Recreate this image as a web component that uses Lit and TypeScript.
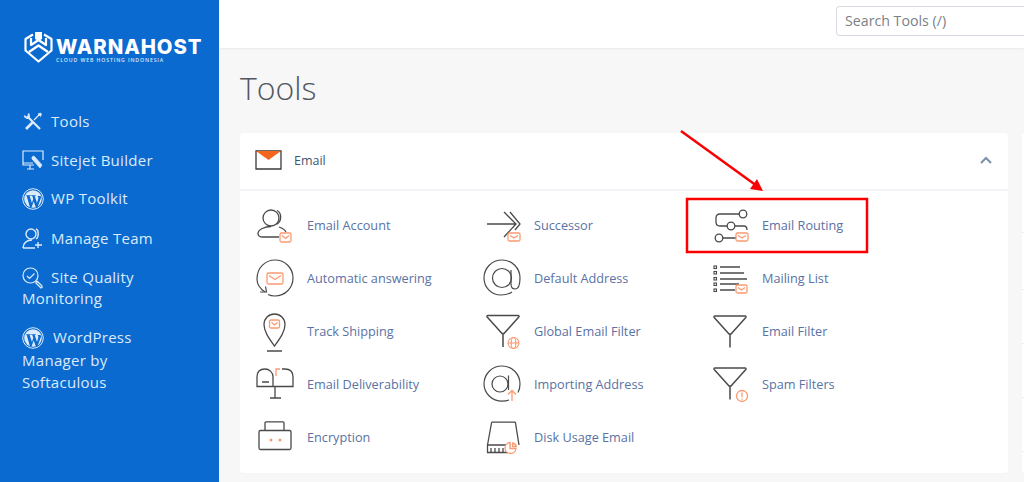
import { LitElement, html, css, svg } from "lit";
import { customElement } from "lit/decorators.js";

const O = "#fb9a70";
const D = "#4a4a4a";
const env = (x: number, y: number, w = 12, h = 10) => svg`<g fill="#fff" stroke="${O}" stroke-width="1.3"><rect x="${x}" y="${y}" width="${w}" height="${h}" rx="1.5"/><path fill="none" d="M${x + 2} ${y + 2.5}l${w / 2 - 2} ${h / 2 - 1.5}l${w / 2 - 2} ${-(h / 2 - 1.5)}"/></g>`;
const funnel = svg`<path d="M2.5 3.5h30c1 0 1.300 1 .8 1.600L18.500 21.500H16.500L1.700 5.100C1.200 4.500 1.500 3.500 2.500 3.500zM17.500 21.500V35" fill="none" stroke="${D}" stroke-width="1.500"/>`;

const ICONS: Record<string, unknown> = {
  account: svg`<g fill="none" stroke="${D}" stroke-width="1.300"><circle cx="16" cy="10" r="8"/><path d="M22 2.500c5 2.500 5 11-.5 14M24 19c3 1 6 3 7 5M24 29H8c-3 0-5-1-5-3.500 0-4 7-7 13-7"/></g>${env(25, 25, 11, 9)}`,
  auto: svg`<g fill="none" stroke="${D}" stroke-width="1.200"><path d="M9 33C3 29 1 24 1 20 1 9 9 1 19 1s18 8 18 18-8 18-18 18c-3 0-5-.5-7-1.500"/><path d="M4 33h6.500l-1-5.500" /></g>${env(11, 14, 16, 11)}`,
  track: svg`<g fill="none" stroke="${D}" stroke-width="1.300"><path d="M13 34C8 27 2.500 20 2.500 12.500a10.500 10.500 0 0 1 21 0C23.500 20 18 27 13 34z"/><path d="M5.500 39h15" stroke-width="1.500"/></g>${env(8, 8, 10, 8)}`,
  deliver: svg`<g fill="none" stroke="${D}" stroke-width="1.300"><path d="M9 2h0c-5 0-8 3-8 8v9.500h36V10c0-5-3-8-8-8h-3M9 2c4 0 8 3 8 8v9.500M19 19.500V31M14 31h11M6 15h7" /></g><path d="M20 9V2h4" fill="none" stroke="${O}" stroke-width="1.300"/>`,
  encrypt: svg`<g fill="none" stroke="${D}" stroke-width="1.300"><rect x="2" y="11" width="32" height="19" rx="1.500"/><path d="M8 11V3.500c0-.8.5-1.200 1-1.200h17c.6 0 1 .4 1 1.200V11"/></g><circle cx="14" cy="20.500" r="1.500" fill="${O}"/><circle cx="23" cy="20.500" r="1.500" fill="${O}"/>`,
  succ: svg`<g fill="none" stroke="${D}" stroke-width="1.300"><path d="M1 14h29M18 2l12 12-12 13M24 2l10 12-5 6"/></g>${env(22, 23, 12, 8)}`,
  at: svg`<g fill="none" stroke="${D}" stroke-width="1.200"><path d="M29 33c-3 2-7 3-11 3C8 36 1 28 1 19 1 9 9 1 19 1s18 8 18 18c0 6-1 11-5 11-3 0-4-2-4-5V11"/><circle cx="19" cy="19" r="9.500"/></g>`,
  global: svg`${funnel}<g fill="#fff" stroke="${O}" stroke-width="1.100"><circle cx="28" cy="31" r="5.500"/><ellipse cx="28" cy="31" rx="2.300" ry="5.500"/><path d="M22.500 31h11"/></g>`,
  importing: svg`<g fill="none" stroke="${D}" stroke-width="1.200"><path d="M26 35c-2 .8-4.500 1.200-7 1.200C9 36.200 1 28 1 19 1 9 9 1 19 1s18 8 18 18c0 3-.6 6-2 8.500"/><circle cx="17" cy="19" r="8"/><path d="M25.500 10.500V25"/></g><path d="M29 36V26M25 29.500l4-4 4 4" fill="none" stroke="${O}" stroke-width="1.300"/>`,
  disk: svg`<g fill="none" stroke="${D}" stroke-width="1.300"><path d="M1.500 24L5.500 2c.1-.5.500-.8 1-.8h22c.5 0 .9.300 1 .8L33 24M1.500 24h23M1.500 24v7.500H22M5 27v4.500M9 27v4.500M13 27v4.500M17 27v4.500"/></g><path d="M30 27.500a5.500 5.500 0 1 1-6-6v6z" fill="#fff" stroke="${O}" stroke-width="1.300"/><path d="M26.500 22c2 .3 3.500 2 3.800 3.500h-3.800z" fill="#fff" stroke="${O}" stroke-width="1.300"/>`,
  routing: svg`<g fill="none" stroke="${D}" stroke-width="1.300"><circle cx="30" cy="6" r="3.800"/><circle cx="18" cy="18" r="3.800"/><circle cx="6" cy="30" r="3.800"/><path d="M26 6H7c-2.500 0-4 1.500-4 4v4c0 2.500 1.500 4 4 4h7M22 18h9c2 0 3 1 3 4M10 30h13"/></g>${env(23, 25, 12, 8)}`,
  mailing: svg`<g fill="none" stroke="${D}"><g stroke-width="1.100"><rect x="1" y="1" width="2.500" height="2.500"/><rect x="1" y="6.500" width="2.500" height="2.500"/><rect x="1" y="12.500" width="2.500" height="2.500"/><rect x="1" y="18" width="2.500" height="2.500"/><rect x="1" y="24" width="2.500" height="2.500"/></g><path stroke-width="1.300" d="M7 2h20M7 8h24M7 14h27M7 19h19M7 25h15"/></g>${env(23, 20, 11, 8)}`,
  filter: funnel,
  spam: svg`${funnel}<circle cx="29.500" cy="31.500" r="5.500" fill="#fff" stroke="${O}" stroke-width="1.300"/><path d="M29.500 28v4.500M29.500 34v1.200" stroke="${O}" stroke-width="1.300"/>`,
};

const ROWS: [string, string, number, number][] = [
  ["Email Account", "account", 0, 3], ["Successor", "succ", 4, 5], ["Email Routing", "routing", 3, 3],
  ["Automatic answering", "auto", 1, 1], ["Default Address", "at", 1, 1], ["Mailing List", "mailing", 3, 7],
  ["Track Shipping", "track", 6.5, 1], ["Global Email Filter", "global", 3.5, 1], ["Email Filter", "filter", 2.5, 1.5],
  ["Email Deliverability", "deliver", 1, 3], ["Importing Address", "importing", 1, 1], ["Spam Filters", "spam", 2.5, 0.5],
  ["Encryption", "encrypt", 2, 2.5], ["Disk Usage Email", "disk", 4, 4],
];

const wp = svg`<g fill="none" stroke="#dcebfa"><circle cx="11" cy="11" r="10.300" stroke-width="1"/></g><circle cx="11" cy="11" r="8.800" fill="#dcebfa"/><path d="M4.500 7.200h4.200v.7l-1.100.2 2.300 7 1.400-4-1-3-1-.2v-.7h4.500v.7l-1.100.2 2.300 6.800 1.200-3.800c.5-1.700-.1-2.600-.7-3.200h3l.6 1.500-3.800 10.300h-1.300l-2.300-6.300-2.300 6.300H8.100L4.700 8l-.9-.1z" fill="#0a6ad0"/>`;

@customElement("app-root")
export class AppRoot extends LitElement {
  static styles = css`
    :host { display: block; width: 1024px; height: 482px; overflow: hidden; position: relative; font-family: "Open Sans", sans-serif; background: #f7f7f8; }
    .app { display: flex; height: 482px; }
    .side { width: 219px; flex: none; background: #0a6ad0; color: #dcebfa; box-sizing: border-box; padding: 32px 0 0 22px; }
    .logo { display: flex; align-items: flex-start; gap: 3px; height: 79px; margin-left: 2px; }
    .logo svg { flex: none; }
    .brand { color: #fff; font-family: "Inter", sans-serif; font-weight: 800; font-size: 20.300px; line-height: 20px; letter-spacing: .93px; margin-top: 5px; white-space: nowrap; }
    .tag { color: #d8e8fa; font-family: "Open Sans", sans-serif; font-size: 5.200px; font-weight: 600; line-height: 6px; letter-spacing: .87px; white-space: nowrap; }
    nav { width: 170px; display: flex; flex-direction: column; }
    .it { font-size: 15px; letter-spacing: .3px; line-height: 21px; }
    .it svg { vertical-align: middle; margin: -4px 7px -4px 0; position: relative; top: -1px; }
    .it .wp2 { margin-right: 9px; }
    .it1 { margin-bottom: 18px; }
    .it2 { margin-bottom: 17px; }
    .it3 { margin-bottom: 19px; }
    .it4 { margin-bottom: 18px; }
    .it5 { margin-bottom: 17px; }
    .it6 { line-height: 22.500px; }
    .main { flex: 1; min-width: 0; display: flex; flex-direction: column; }
    .top { height: 48px; background: #fff; box-shadow: 0 1px 2px rgba(0,0,0,.06); display: flex; justify-content: flex-end; align-items: flex-start; padding-top: 6px; box-sizing: border-box; }
    .search { width: 188px; height: 30px; box-sizing: border-box; border: 1px solid #d8dbe3; border-right: 0; border-radius: 4px 0 0 4px; color: #7b7f86; font-size: 14.200px; line-height: 28px; padding-left: 8px; background: #fff; }
    h1 { margin: 0 0 17px; font-weight: 300; font-size: 32px; line-height: 44px; color: #50565f; padding: 18px 0 0 21px; height: 68px; box-sizing: border-box; }
    .cols { display: flex; gap: 14px; padding-left: 21px; }
    .card { width: 768px; flex: none; height: 340px; background: #fff; border-radius: 4px; box-shadow: 0 0 2px rgba(0,0,0,.02); }
    .head { height: 58px; box-sizing: border-box; display: flex; align-items: center; border-bottom: 2px solid #f2f3f7; padding: 0 16px 2px 15px; font-size: 12.500px; color: #3f5671; }
    .head span { margin-left: 12px; flex: 1; }
    .grid { display: grid; grid-template-columns: 227px 228px 228px; grid-auto-rows: 53px; padding-top: 8px; }
    .cell { display: flex; align-items: center; padding-left: 15px; }
    .cell svg { flex: none; width: 52px; height: 42px; overflow: visible; }
    .cell span { font-size: 12.700px; color: #5a72a4; white-space: nowrap; padding-bottom: 2px; }
    .other { flex: 1; height: 340px; background: #fff; border-radius: 4px 0 0 4px; }
    .ln { display: block; box-sizing: border-box; border-bottom: 1px solid #eceef1; height: 54px; }
    .ln.a { height: 100px; }
    .ln.b { height: 57px; }
    .over { position: absolute; inset: 0; pointer-events: none; }
  `;

  render() {
    return html`
      <div class="app">
        <aside class="side">
          <div class="logo">
            <svg width="29" height="31" viewBox="0 0 29 31" fill="none" stroke="#fff" stroke-linejoin="round">
              <path d="M9 2.500L1.500 7V18.500L14.500 29.500 27.500 18.500V7L20 2.500" stroke-width="2.200"/>
              <path d="M7 6V13L14.500 8 22 13V6" stroke-width="2.200"/>
              <path d="M5 20L14.500 13.500 24 20" stroke-width="2.400"/>
              <path d="M11 0h7v7l-3.500 2L11 7z" fill="#fff" stroke="none"/>
            </svg>
            <div>
              <div class="brand">WARNAHOST</div>
              <div class="tag">CLOUD WEB HOSTING INDONESIA</div>
            </div>
          </div>
          <nav>
            <div class="it it1"><svg width="22" height="21" viewBox="0 0 22 21" fill="none" stroke="#dcebfa"><path d="M5 5l13 13" stroke-width="2.200"/><path d="M2.500 4.500c.5 2 2 3 4 2.500.8-1 .9-2.500-.2-4.500" stroke-width="1.600"/><path d="M4 18l7-7" stroke-width="2.600"/><path d="M12 9l5-5" stroke-width="1.300"/><path d="M16 3l2.500-1 1 1-1 2.500z" fill="#dcebfa" stroke-width=".8"/></svg>Tools</div>
            <div class="it it2"><svg width="22" height="21" viewBox="0 0 22 21" fill="none" stroke="#dcebfa" stroke-width="1.200"><path d="M12 15H1V1h20v9M8 15v3.500M5 19h7M1 13h10"/><path d="M10 7l2-1 8 9-2 3-8-9z" fill="#dcebfa" stroke-width=".7"/></svg>Sitejet Builder</div>
            <div class="it it3"><svg width="22" height="22" viewBox="0 0 22 22">${wp}</svg>WP Toolkit</div>
            <div class="it it4"><svg width="22" height="21" viewBox="0 0 22 21" fill="none" stroke="#dcebfa" stroke-width="1.400"><circle cx="9" cy="6" r="5"/><path d="M14 1c3 1 3 8 0 10M1 20c0-5 4-8 9-8M1 20h12M16 14v6M13 17h7"/></svg>Manage Team</div>
            <div class="it it5"><svg width="22" height="22" viewBox="0 0 22 22" fill="none" stroke="#dcebfa" stroke-width="1.200"><circle cx="8.500" cy="8.500" r="7.500"/><path d="M5 9l2.500 2.500 5-5M14 14l1.500 1.500M15 14l5 5c.8 1-.6 2.500-1.500 1.500l-5-5"/></svg>Site Quality Monitoring</div>
            <div class="it it6"><svg class="wp2" width="22" height="22" viewBox="0 0 22 22">${wp}</svg>WordPress Manager by Softaculous</div>
          </nav>
        </aside>
        <div class="main">
          <div class="top"><div class="search">Search Tools (/)</div></div>
          <h1>Tools</h1>
          <div class="cols">
            <section class="card">
              <div class="head">
                <svg width="27" height="20" viewBox="0 0 27 20">
                  <path d="M1 1h25v18H1z" fill="#fff" stroke="#3a3a3a" stroke-width="1.300"/>
                  <path d="M1 1h25L13.500 10z" fill="#f4661e"/>
                </svg>
                <span>Email</span>
                <svg width="12" height="8" viewBox="0 0 12 8" fill="none" stroke="#7a90a8" stroke-width="2"><path d="M1 7l5-5 5 5"/></svg>
              </div>
              <div class="grid">
                ${ROWS.map(([t, k, dx, dy]) => html`<div class="cell"><svg viewBox="${-dx} ${-dy} 52 42">${ICONS[k]}</svg><span>${t}</span></div>`)}
              </div>
            </section>
            <div class="other"><i class="ln a"></i><i class="ln b"></i><i class="ln"></i><i class="ln"></i><i class="ln"></i></div>
          </div>
        </div>
      </div>
      <svg class="over" width="1024" height="482" viewBox="0 0 1024 482">
        <rect x="687" y="199" width="180" height="53" fill="none" stroke="#fa0000" stroke-width="2.500"/>
        <path d="M681 131L757 186" stroke="#fa0000" stroke-width="2.500"/>
        <path d="M763 191L750 189 757 179z" fill="#fa0000"/>
      </svg>
    `;
  }
}
